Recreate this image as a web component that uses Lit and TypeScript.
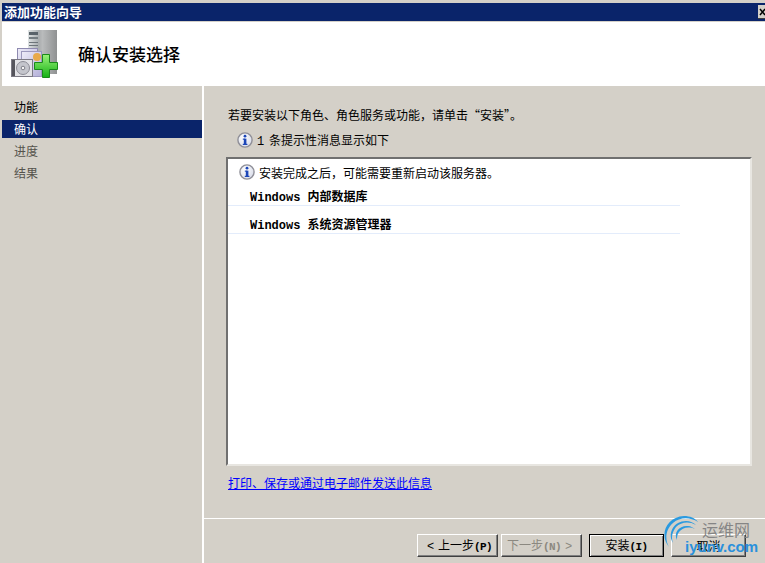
import { LitElement, html, css, svg } from "lit";
import { customElement } from "lit/decorators.js";

const info = (size: number) => svg`<svg class="info" width=${size} height=${size} viewBox="0 0 16 16">
  <defs><radialGradient id="ig" cx="40%" cy="35%" r="70%"><stop offset="0" stop-color="#ffffff"/><stop offset="1" stop-color="#d6dae8"/></radialGradient></defs>
  <circle cx="8" cy="8" r="7.1" fill="url(#ig)" stroke="#8f8f98" stroke-width="1.4"/>
  <rect x="6.8" y="6.6" width="2.6" height="5.6" fill="#1c46b8"/>
  <rect x="5.8" y="11.8" width="4.6" height="1.2" fill="#1c46b8"/>
  <rect x="5.8" y="6.6" width="2" height="1.1" fill="#1c46b8"/>
  <circle cx="8" cy="4.2" r="1.4" fill="#1c46b8"/>
</svg>`;

const wizardIcon = svg`<svg width="50" height="50" viewBox="0 0 50 50">
  <defs>
    <linearGradient id="srv" x1="0" x2="1"><stop offset="0" stop-color="#7e8285"/><stop offset="0.5" stop-color="#b9bbbc"/><stop offset="1" stop-color="#8f9192"/></linearGradient>
    <linearGradient id="front" x1="0" x2="1"><stop offset="0" stop-color="#dfe3e4"/><stop offset="1" stop-color="#a7adaf"/></linearGradient>
    <linearGradient id="plus" x1="0" y1="0" x2="0" y2="1"><stop offset="0" stop-color="#9af27a"/><stop offset="1" stop-color="#14b014"/></linearGradient>
    <linearGradient id="pg" x1="0" y1="0" x2="1" y2="1"><stop offset="0" stop-color="#eeecf8"/><stop offset="1" stop-color="#b3afd8"/></linearGradient>
  </defs>
  <rect x="18" y="1" width="29" height="44" fill="url(#srv)"/>
  <rect x="18" y="1" width="11" height="44" fill="url(#front)"/>
  <rect x="19" y="3" width="9" height="3" fill="#59636a"/>
  <rect x="19" y="8" width="9" height="2" fill="#747d82"/>
  <rect x="19" y="13" width="9" height="1" fill="#6d757a"/>
  <rect x="19" y="16" width="9" height="1" fill="#6d757a"/>
  <rect x="7.5" y="19.5" width="20" height="26" fill="url(#pg)" stroke="#8e8ab0"/>
  <rect x="11.5" y="22.5" width="20" height="25" fill="url(#pg)" stroke="#9c98bd"/>
  <circle cx="27" cy="28" r="4" fill="#e8a94a"/>
  <rect x="1.5" y="30.5" width="21" height="17" fill="#e2e2e6" stroke="#7c7a84"/>
  <rect x="2" y="31" width="3" height="16" fill="#55555c"/>
  <circle cx="13" cy="39" r="6.5" fill="#c4c5cc" stroke="#8d8d96"/>
  <circle cx="13" cy="39" r="1.8" fill="#f4f4f4" stroke="#808088"/>
  <path d="M32.5 25.5h7v8h8v7h-8v8h-7v-8h-8v-7h8z" fill="url(#plus)" stroke="#1a8a1a"/>
</svg>`;

@customElement("app-root")
export class AppRoot extends LitElement {
  static styles = css`
    :host {
      display: block;
      width: 765px;
      height: 563px;
      box-sizing: border-box;
      position: relative;
      overflow: hidden;
      background: #d4d0c8;
      padding-left: 2px;
      font-family: "Noto Sans CJK SC", "Liberation Sans", sans-serif;
      font-size: 12px;
      color: #000;
      -webkit-font-smoothing: none;
    }
    .frame { display: flex; flex-direction: column; height: 100%; padding-top: 3px; box-sizing: border-box; }
    .titlebar {
      height: 18px; flex: none; background: #0a246a; color: #fff; font-weight: 700; font-size: 13px;
      display: flex; align-items: center; justify-content: space-between;
      padding-left: 2px; line-height: 18px;
    }
    .close { width: 7px; height: 14px; display: block; flex: none; }
    .header {
      height: 65px; flex: none; background: #fff; border-top: 1px solid #d4d0c8; box-sizing: border-box;
      display: flex; align-items: center; padding-left: 8px; gap: 18px;
    }
    .header h1 { margin: 0 0 2px; font-size: 17px; font-weight: 500; }
    .body { flex: 1; display: flex; min-height: 0; }
    .side { flex: none; padding-top: 11px; box-sizing: border-box; border-right: 2px solid #fff; width: 202px; }
    .side div { height: 22px; line-height: 22px; padding-left: 12px; color: #55534c; }
    .side div.first { color: #000; height: 23px; line-height: 20px; }
    .side div.on { background: #0a246a; color: #fff; height: 18px; line-height: 18px; margin-bottom: 2px; }
    .main { flex: 1; display: flex; flex-direction: column; min-width: 0; }
    .content { flex: 1; padding: 20px 13px 0 22px; min-height: 0; display: flex; flex-direction: column; }
    .lead { height: 18px; line-height: 18px; padding-left: 2px; font-feature-settings: "fwid"; }
    .note { display: flex; align-items: center; gap: 4px; height: 18px; margin: 7px 0 0 11px; line-height: 18px; }
    .note > span { position: relative; top: 1px; }
    .m { font-family: "Liberation Mono", monospace; }
    .note .m { font-size: 12px; letter-spacing: -1.2px; }
    .box {
      height: 309px; margin-top: 8px; background: #fff; box-sizing: border-box;
      border: 2px solid; border-color: #707070 #e8e6e1 #e8e6e1 #707070;
      padding: 4px 0 0 0; flex: none;
    }
    .msg { display: flex; align-items: center; gap: 4px; height: 18px; padding-left: 11px; }
    .item {
      width: 452px; height: 25px; line-height: 22px; padding: 4px 0 0 22px; box-sizing: border-box;
      font-weight: 700; border-bottom: 1px solid #e3ecfb;
    }
    .item + .item { height: 28px; padding-top: 7px; }
    .link { margin: 8px 0 0 2px; color: #0000ff; text-decoration: underline; line-height: 18px; height: 18px; }
    .footer {
      height: 45px; flex: none; border-top: 1px solid #fff; box-sizing: border-box;
      display: flex; justify-content: flex-end; padding: 15px 19px 0 0; gap: 7px;
    }
    button {
      all: unset; box-sizing: border-box; height: 23px; text-align: center; line-height: 20px; font-size: 12px;
      background: #d4d0c8; border: 1px solid; border-color: #fff #404040 #404040 #fff;
      box-shadow: inset -1px -1px 0 #808080;
      font-family: "Noto Sans CJK SC", "Liberation Sans", sans-serif;
    }
    button .m { font-size: 11px; letter-spacing: -0.6px; font-weight: 700; }
    button .c { font-size: 12px; font-weight: 400; padding: 0 4px; letter-spacing: 0; }
    .nav { width: 81px; }
    .pair { display: flex; gap: 3px; }
    button.dis { color: #8b8880; }
    button.def { width: 75px; border-color: #000; box-shadow: inset 1px 1px 0 #fff, inset -1px -1px 0 #808080; }
    button.cancel { width: 75px; }
    .wm { position: absolute; left: 658px; top: 513px; width: 107px; height: 50px; pointer-events: none; }
    .wm .cn { position: absolute; left: 44px; top: 6px; font-size: 16px; line-height: 20px; color: #858585; white-space: nowrap; }
    .wm .en { position: absolute; left: 27px; top: 22px; font-family: "Liberation Sans", sans-serif; font-size: 15px; font-weight: 700; line-height: 24px; color: #2a90dc; white-space: nowrap; }
    .wm svg { position: absolute; left: 2px; top: 2px; }
  `;

  render() {
    return html`
      <div class="frame">
        <div class="titlebar"><span>添加功能向导</span>
          <svg class="close" viewBox="0 0 7 14"><rect width="7" height="14" fill="#d4d0c8"/><rect y="13" width="7" height="1" fill="#404040"/><path d="M2 4l5 6M7 4l-5 6" stroke="#000" stroke-width="1.5" fill="none"/></svg>
        </div>
        <div class="header">${wizardIcon}<h1>确认安装选择</h1></div>
        <div class="body">
          <nav class="side">
            <div class="first">功能</div>
            <div class="on">确认</div>
            <div>进度</div>
            <div>结果</div>
          </nav>
          <div class="main">
            <div class="content">
              <div class="lead">若要安装以下角色、角色服务或功能，请单击“安装”。</div>
              <div class="note">${info(16)}<span><span class="m">1 </span>条提示性消息显示如下</span></div>
              <div class="box">
                <div class="msg">${info(16)}<span>安装完成之后，可能需要重新启动该服务器。</span></div>
                <div class="item"><span class="m">Windows </span>内部数据库</div>
                <div class="item"><span class="m">Windows </span>系统资源管理器</div>
              </div>
              <div class="link">打印、保存或通过电子邮件发送此信息</div>
            </div>
            <div class="footer">
              <div class="pair">
                <button class="nav"><span class="m c">&lt;</span>上一步<span class="m">(P)</span></button>
                <button class="nav dis">下一步<span class="m">(N)</span><span class="m c">&gt;</span></button>
              </div>
              <button class="def">安装<span class="m">(I)</span></button>
              <button class="cancel">取消</button>
            </div>
          </div>
        </div>
      </div>
      <div class="wm">
        <svg width="44" height="46" viewBox="0 0 44 46" fill="#2a9ae0">
          <path d="M9 32C-1 20 6 2 24 1C30 1 35 3 38 7C30 2 20 2 13 8C5 15 5 25 9 32Z"/>
          <path d="M13 28C7 18 14 6 26 6C30 6 34 8 36 10C29 6 21 7 16 12C12 17 11 23 13 28Z"/>
          <path d="M17 25C13 17 20 10 28 11C31 11 33 13 35 14C28 11 22 13 19 17C17 20 17 22 17 25Z"/>
        </svg>
        <span class="cn">运维网</span>
        <span class="en">iyunv.com</span>
      </div>
    `;
  }
}
